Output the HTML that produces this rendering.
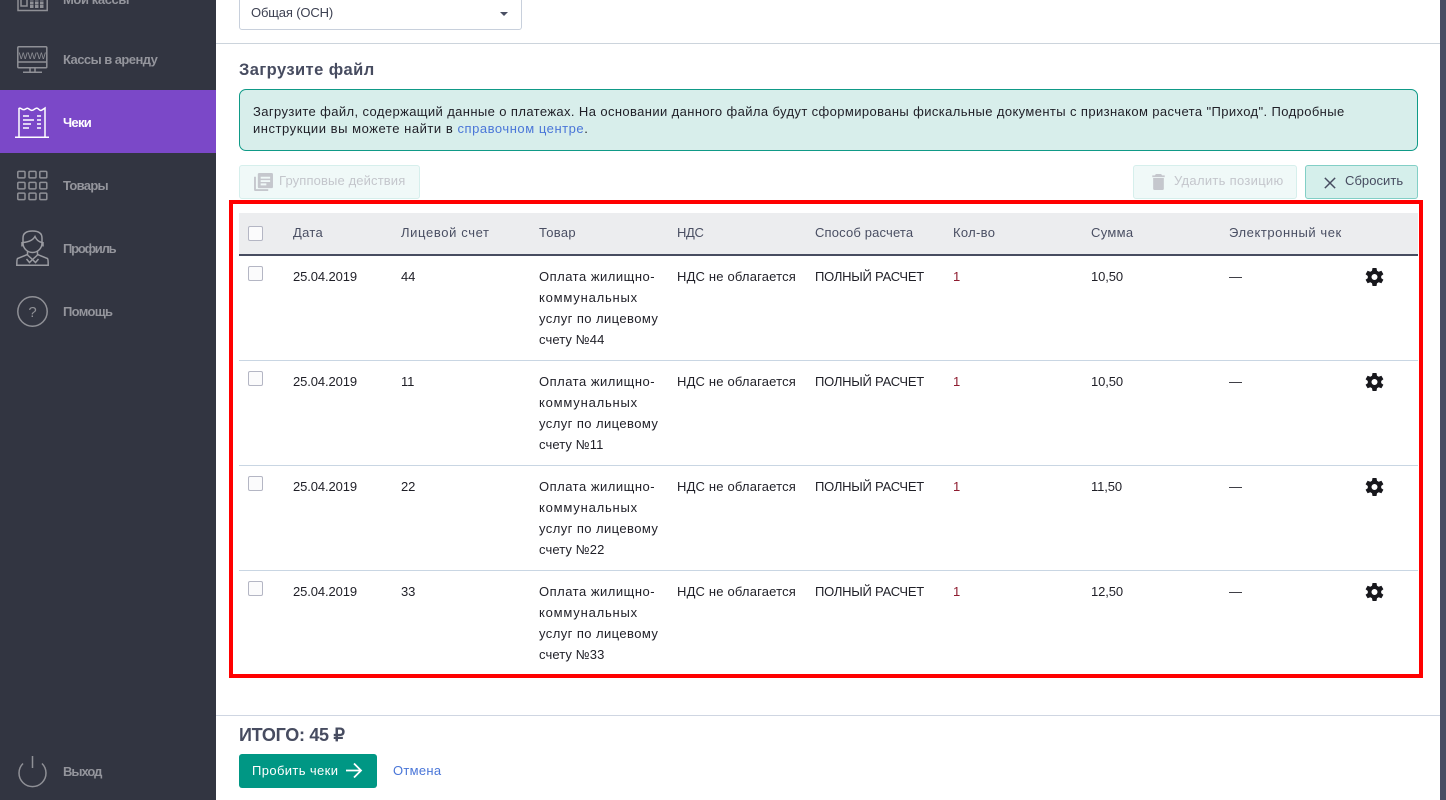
<!DOCTYPE html>
<html lang="ru">
<head>
<meta charset="utf-8">
<title>Чеки</title>
<style>
html,body{margin:0;padding:0;width:1446px;height:800px;overflow:hidden;background:#fff}
body{position:relative;font-family:"Liberation Sans","Noto Sans CJK SC",sans-serif;font-size:13px;color:#1e1e24}
.a{position:absolute;white-space:nowrap}
.t{position:absolute;white-space:nowrap;font-size:13px;line-height:21px;letter-spacing:.3px;color:#1f1f27}
.h{color:#4a4f63;line-height:20px;top:223px}
.s{position:absolute;left:0;top:0;width:216px;height:800px;background:#323541}
.n{position:absolute;left:63px;font-size:13px;line-height:18px;font-weight:bold;color:#94959c;letter-spacing:-.5px;white-space:nowrap}
svg{position:absolute;overflow:visible}
.cb{position:absolute;left:248px;width:13px;height:13px;border:1px solid #b4b6c4;border-radius:2px;background:#fbfbfc}
.rl{position:absolute;left:239px;width:1179px;height:1px;background:#c9d6e3}
.d{letter-spacing:-.1px}.r{letter-spacing:-.24px}.v{letter-spacing:.18px}.m{letter-spacing:-.1px}
.q{color:#8e1c30}
.l1{letter-spacing:.5px}.l2{letter-spacing:.8px}.l3{letter-spacing:.42px}.l4{letter-spacing:.1px}
</style>
</head>
<body>
<div class="s"></div>
<div class="a" style="left:0;top:90px;width:216px;height:63px;background:#7b48c8"></div>

<svg style="left:17px;top:0" width="32" height="12" viewBox="0 0 32 12" fill="none" stroke="#8f9096" stroke-width="1.5"><path d="M1 -4V10.5H30.2V-4"/><path d="M4 -2H10V6H4Z"/><path d="M13 -1H28M13 3H28M13 6.500H28" stroke-width="3" stroke-dasharray="3.500 1.500"/></svg>
<div class="n" style="top:-9px;letter-spacing:-.4px">Мои кассы</div>

<svg style="left:17px;top:46px" width="31" height="27" viewBox="0 0 31 27" fill="none" stroke="#8f9096" stroke-width="1.5"><rect x=".8" y=".8" width="29" height="21" rx="1"/><path d="M.8 16H29.800M13 22V25.500M18 22V25.500M6 26.200H25"/><text x="15.300" y="12.800" text-anchor="middle" font-family="Liberation Sans" font-size="9.500" fill="#8f9096" stroke="none" letter-spacing=".1">WWW</text></svg>
<div class="n" style="top:51px;letter-spacing:-.55px">Кассы в аренду</div>

<svg style="left:15px;top:106px" width="35" height="33" viewBox="0 0 35 33" fill="none" stroke="#fff" stroke-width="1.500"><path d="M4 31V2.500C6 1 7 4.500 9.500 3.500S12 1.500 14 3S17 5 19 3.500S22 1.500 24 3.500S27 4 30 2V31"/><path d="M0 31.200H34"/><path d="M8 10H14M22 10H26M8 14H19M22 14H26M8 18H16M22 18H26M8 22H14M22 22H26" stroke-width="1.400"/></svg>
<div class="n" style="top:114px;color:#fff;letter-spacing:-.7px">Чеки</div>

<svg style="left:17px;top:170px" width="31" height="31" viewBox="0 0 31 31" fill="none" stroke="#8f9096" stroke-width="1.500"><rect x=".8" y="1.400" width="7.200" height="6.500" rx="1"/><rect x="12" y="1.400" width="7" height="6.500" rx="1"/><rect x="22.800" y="1.400" width="7" height="6.500" rx="1"/><rect x=".8" y="12.400" width="7.200" height="6.500" rx="1"/><rect x="12" y="12.400" width="7" height="6.500" rx="1"/><rect x="22.800" y="12.400" width="7" height="6.500" rx="1"/><rect x=".8" y="23.100" width="7.200" height="6.500" rx="1"/><rect x="12" y="23.100" width="7" height="6.500" rx="1"/><rect x="22.800" y="23.100" width="7" height="6.500" rx="1"/></svg>
<div class="n" style="top:177px;letter-spacing:-.7px">Товары</div>

<svg style="left:16px;top:230px" width="33" height="36" viewBox="0 0 33 36" fill="none" stroke="#9a9ba1" stroke-width="1.500"><path d="M7 13V8C7 3 11 1 16.500 1S26 3 26 8V13C26 19 21 22.500 16.500 22.500S7 19 7 13Z"/><path d="M7 12.500C13 12 17 10 19 6.500C20.500 10 23 12 26 12.500"/><path d="M6 12V16.500M27 12V16.500"/><path d="M11.500 21.500V24.500L1.500 28.500C1 29 .800 31 .800 35.200H32.200C32.200 31 32 29 31.500 28.500L21.500 24.500V21.500"/><path d="M11.500 25L16.500 29.500L21.500 25M16.500 29.500L13.500 32.500L10.500 29M16.500 29.500L19.500 32.500L22.500 29"/></svg>
<div class="n" style="top:240px;letter-spacing:-1.200px">Профиль</div>

<svg style="left:17px;top:296px" width="31" height="31" viewBox="0 0 31 31" fill="none" stroke="#8f9096" stroke-width="1.500"><circle cx="15.500" cy="15.500" r="14.700"/><text x="15.500" y="21" text-anchor="middle" font-family="Liberation Sans" font-size="15" fill="#8f9096" stroke="none">?</text></svg>
<div class="n" style="top:303px;letter-spacing:-.7px">Помощь</div>

<svg style="left:18px;top:756px" width="29" height="32" viewBox="0 0 29 32" fill="none" stroke="#8f9096" stroke-width="1.500"><path d="M14.500 0V12"/><path d="M5 7.500A13.500 13.500 0 1 0 24 7.500"/></svg>
<div class="n" style="top:763px;letter-spacing:-1px">Выход</div>

<div class="a" style="left:239px;top:-12px;width:281px;height:40px;border:1px solid #c8d0dc;border-radius:3px;background:#fff"></div>
<div class="t" style="left:251px;top:2px;color:#3d4152;letter-spacing:-.15px">Общая (ОСН)</div>
<div class="a" style="left:500px;top:12px;width:0;height:0;border-left:4.500px solid transparent;border-right:4.500px solid transparent;border-top:4.500px solid #4a4f63"></div>
<div class="a" style="left:216px;top:43px;width:1224px;height:1px;background:#ccd4dc"></div>

<div class="a" style="left:239px;top:60px;font-size:16.500px;line-height:20px;font-weight:bold;color:#474c60;letter-spacing:.43px">Загрузите файл</div>

<div class="a" style="left:239px;top:89px;width:1177px;height:60px;border:1px solid #0f9a87;border-radius:7px;background:#d8eeeb"></div>
<div class="t" style="left:253px;top:101px;letter-spacing:.39px">Загрузите файл, содержащий данные о платежах. На основании данного файла будут сформированы фискальные документы с признаком расчета "Приход". Подробные</div>
<div class="t" style="left:253px;top:118px;letter-spacing:.54px">инструкции вы можете найти в <span style="color:#4a76d8">справочном центре</span>.</div>

<div class="a" style="left:239px;top:165px;width:179px;height:32px;border:1px solid #d6efec;border-radius:3px;background:#f0f9f8"></div>
<svg style="left:254px;top:173px" width="19" height="18" viewBox="0 0 20 19" fill="#c5c7cd"><path d="M0 4H2V17H15V19H1.500Q0 19 0 17.500Z"/><path fill-rule="evenodd" d="M4 1.500Q4 0 5.500 0H18.500Q20 0 20 1.500V14.500Q20 16 18.500 16H5.500Q4 16 4 14.500ZM7 4V6H17V4ZM7 7.500V9.500H17V7.500ZM7 11V13H13V11Z"/></svg>
<div class="t" style="left:279px;top:170px;color:#c4c6cc;letter-spacing:.13px">Групповые действия</div>

<div class="a" style="left:1133px;top:165px;width:162px;height:32px;border:1px solid #d6efec;border-radius:3px;background:#f0f9f8"></div>
<svg style="left:1152px;top:174px" width="13" height="16" viewBox="0 0 14 18" fill="#c5c7cd"><path d="M4 0H10L11 1.500H14V3.500H0V1.500H3Z"/><path d="M1 4.500H13V16.500Q13 18 11.500 18H2.500Q1 18 1 16.500Z"/></svg>
<div class="t" style="left:1174px;top:170px;color:#c4c6cc">Удалить позицию</div>

<div class="a" style="left:1305px;top:165px;width:111px;height:32px;border:1px solid #82cfc6;border-radius:3px;background:#d5efeb"></div>
<svg style="left:1324px;top:176.500px" width="12" height="12" viewBox="0 0 14 14" fill="none" stroke="#474c60" stroke-width="1.700"><path d="M1 1L13 13M13 1L1 13"/></svg>
<div class="t" style="left:1345px;top:170px;color:#474c60;letter-spacing:.05px">Сбросить</div>

<div class="a" style="left:229px;top:200px;width:1186px;height:470px;border:4px solid #f00"></div>

<div class="a" style="left:239px;top:213px;width:1179px;height:41px;background:#ecedef"></div>
<div class="a" style="left:239px;top:254px;width:1179px;height:2px;background:#474c60"></div>
<div class="cb" style="top:226px"></div>
<div class="t h" style="left:293px">Дата</div>
<div class="t h" style="left:401px;letter-spacing:.63px">Лицевой счет</div>
<div class="t h" style="left:539px">Товар</div>
<div class="t h" style="left:677px;letter-spacing:-.37px">НДС</div>
<div class="t h" style="left:815px;letter-spacing:.16px">Способ расчета</div>
<div class="t h" style="left:953px">Кол-во</div>
<div class="t h" style="left:1091px">Сумма</div>
<div class="t h" style="left:1229px;letter-spacing:.57px">Электронный чек</div>

<!-- row 1 -->
<div class="cb" style="top:266px"></div>
<div class="t d" style="left:293px;top:266px">25.04.2019</div>
<div class="t m" style="left:401px;top:266px">44</div>
<div class="t" style="left:539px;top:266px"><span class="l1">Оплата жилищно-</span><br><span class="l2">коммунальных</span><br><span class="l3">услуг по лицевому</span><br><span class="l4">счету №44</span></div>
<div class="t v" style="left:677px;top:266px">НДС не облагается</div>
<div class="t r" style="left:815px;top:266px">ПОЛНЫЙ РАСЧЕТ</div>
<div class="t q" style="left:953px;top:266px">1</div>
<div class="t m" style="left:1091px;top:266px">10,50</div>
<div class="t" style="left:1229px;top:266px">—</div>
<svg style="left:1365px;top:267px" width="19" height="20" viewBox="0 0 19 20"><path fill="#17171c" fill-rule="evenodd" d="M7.500 0H11.500L12 2.800L13.700 3.700L16.400 2.700L18.400 6.200L16.200 8V10.100L18.400 11.800L16.400 15.300L13.700 14.300L12 15.300L11.500 18H7.500L7 15.300L5.300 14.300L2.600 15.300L.6 11.800L2.800 10.100V8L.6 6.200L2.600 2.700L5.300 3.700L7 2.800ZM9.500 6A3 3 0 1 0 9.500 12A3 3 0 1 0 9.500 6Z" transform="translate(0 1)"/></svg>
<div class="rl" style="top:360px"></div>

<!-- row 2 -->
<div class="cb" style="top:371px"></div>
<div class="t d" style="left:293px;top:371px">25.04.2019</div>
<div class="t m" style="left:401px;top:371px">11</div>
<div class="t" style="left:539px;top:371px"><span class="l1">Оплата жилищно-</span><br><span class="l2">коммунальных</span><br><span class="l3">услуг по лицевому</span><br><span class="l4">счету №11</span></div>
<div class="t v" style="left:677px;top:371px">НДС не облагается</div>
<div class="t r" style="left:815px;top:371px">ПОЛНЫЙ РАСЧЕТ</div>
<div class="t q" style="left:953px;top:371px">1</div>
<div class="t m" style="left:1091px;top:371px">10,50</div>
<div class="t" style="left:1229px;top:371px">—</div>
<svg style="left:1365px;top:372px" width="19" height="20" viewBox="0 0 19 20"><path fill="#17171c" fill-rule="evenodd" d="M7.500 0H11.500L12 2.800L13.700 3.700L16.400 2.700L18.400 6.200L16.200 8V10.100L18.400 11.800L16.400 15.300L13.700 14.300L12 15.300L11.500 18H7.500L7 15.300L5.300 14.300L2.600 15.300L.6 11.800L2.800 10.100V8L.6 6.200L2.600 2.700L5.300 3.700L7 2.800ZM9.500 6A3 3 0 1 0 9.500 12A3 3 0 1 0 9.500 6Z" transform="translate(0 1)"/></svg>
<div class="rl" style="top:465px"></div>

<!-- row 3 -->
<div class="cb" style="top:476px"></div>
<div class="t d" style="left:293px;top:476px">25.04.2019</div>
<div class="t m" style="left:401px;top:476px">22</div>
<div class="t" style="left:539px;top:476px"><span class="l1">Оплата жилищно-</span><br><span class="l2">коммунальных</span><br><span class="l3">услуг по лицевому</span><br><span class="l4">счету №22</span></div>
<div class="t v" style="left:677px;top:476px">НДС не облагается</div>
<div class="t r" style="left:815px;top:476px">ПОЛНЫЙ РАСЧЕТ</div>
<div class="t q" style="left:953px;top:476px">1</div>
<div class="t m" style="left:1091px;top:476px">11,50</div>
<div class="t" style="left:1229px;top:476px">—</div>
<svg style="left:1365px;top:477px" width="19" height="20" viewBox="0 0 19 20"><path fill="#17171c" fill-rule="evenodd" d="M7.500 0H11.500L12 2.800L13.700 3.700L16.400 2.700L18.400 6.200L16.200 8V10.100L18.400 11.800L16.400 15.300L13.700 14.300L12 15.300L11.500 18H7.500L7 15.300L5.300 14.300L2.600 15.300L.6 11.800L2.800 10.100V8L.6 6.200L2.600 2.700L5.300 3.700L7 2.800ZM9.500 6A3 3 0 1 0 9.500 12A3 3 0 1 0 9.500 6Z" transform="translate(0 1)"/></svg>
<div class="rl" style="top:570px"></div>

<!-- row 4 -->
<div class="cb" style="top:581px"></div>
<div class="t d" style="left:293px;top:581px">25.04.2019</div>
<div class="t m" style="left:401px;top:581px">33</div>
<div class="t" style="left:539px;top:581px"><span class="l1">Оплата жилищно-</span><br><span class="l2">коммунальных</span><br><span class="l3">услуг по лицевому</span><br><span class="l4">счету №33</span></div>
<div class="t v" style="left:677px;top:581px">НДС не облагается</div>
<div class="t r" style="left:815px;top:581px">ПОЛНЫЙ РАСЧЕТ</div>
<div class="t q" style="left:953px;top:581px">1</div>
<div class="t m" style="left:1091px;top:581px">12,50</div>
<div class="t" style="left:1229px;top:581px">—</div>
<svg style="left:1365px;top:582px" width="19" height="20" viewBox="0 0 19 20"><path fill="#17171c" fill-rule="evenodd" d="M7.500 0H11.500L12 2.800L13.700 3.700L16.400 2.700L18.400 6.200L16.200 8V10.100L18.400 11.800L16.400 15.300L13.700 14.300L12 15.300L11.500 18H7.500L7 15.300L5.300 14.300L2.600 15.300L.6 11.800L2.800 10.100V8L.6 6.200L2.600 2.700L5.300 3.700L7 2.800ZM9.500 6A3 3 0 1 0 9.500 12A3 3 0 1 0 9.500 6Z" transform="translate(0 1)"/></svg>

<div class="a" style="left:216px;top:715px;width:1224px;height:1px;background:#cfd6e2"></div>
<div class="a" style="left:239px;top:724px;font-size:18px;line-height:22px;font-weight:bold;color:#474c60;letter-spacing:-.3px">ИТОГО: 45 ₽</div>
<div class="a" style="left:239px;top:754px;width:138px;height:34px;border-radius:3px;background:#009784"></div>
<div class="t" style="left:252px;top:760px;color:#fff;letter-spacing:.38px">Пробить чеки</div>
<svg style="left:346px;top:762px" width="16" height="17" viewBox="0 0 16 17" fill="none" stroke="#fff" stroke-width="1.800"><path d="M0 8.500H15M8 1.500L15 8.500L8 15.500"/></svg>
<div class="t" style="left:393px;top:760px;color:#4a76d8">Отмена</div>

<div class="a" style="left:1440px;top:0;width:6px;height:800px;background:#484d63"></div>
</body>
</html>
